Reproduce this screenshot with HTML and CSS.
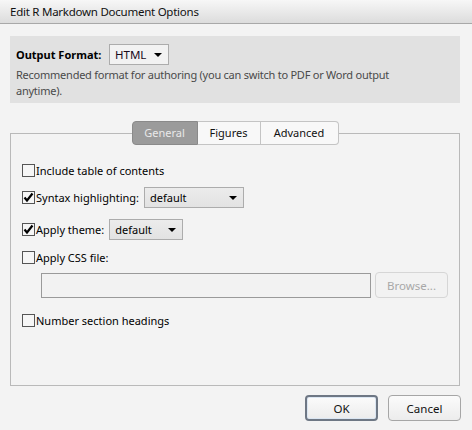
FILE: index.html
```html
<!DOCTYPE html>
<html>
<head>
<meta charset="utf-8">
<link rel="stylesheet" href="styles.css">
</head>
<body>
<div class="dialog">
  <div class="titlebar">Edit R Markdown Document Options</div>
  <div class="content">
    <div class="format-box">
      <div class="format-row">
        <span class="format-label">Output Format:</span>
        <div class="select select-html"><span>HTML</span><span class="arrow"></span></div>
      </div>
      <div class="format-desc">Recommended format for authoring (you can switch to PDF or Word output anytime).</div>
    </div>
    <div class="tabpanel">
      <div class="tabs">
        <div class="tab active">General</div>
        <div class="tab">Figures</div>
        <div class="tab">Advanced</div>
      </div>
      <div class="options">
        <div class="opt opt-toc"><span class="cb"></span><span>Include table of contents</span></div>
        <div class="opt opt-syntax"><span class="cb checked"><svg viewBox="0 0 13 13" width="13" height="13"><path d="M2.5 6.5 L5 9.5 L10.5 2.5" fill="none" stroke="#000" stroke-width="2.2"/></svg></span><span>Syntax highlighting:</span>
          <div class="select select-syntax"><span>default</span><span class="arrow"></span></div></div>
        <div class="opt opt-theme"><span class="cb checked"><svg viewBox="0 0 13 13" width="13" height="13"><path d="M2.5 6.5 L5 9.5 L10.5 2.5" fill="none" stroke="#000" stroke-width="2.2"/></svg></span><span>Apply theme:</span>
          <div class="select select-theme"><span>default</span><span class="arrow"></span></div></div>
        <div class="opt opt-css"><span class="cb"></span><span>Apply CSS file:</span></div>
        <div class="file-row"><div class="file-input"></div><div class="btn browse">Browse...</div></div>
        <div class="opt opt-num"><span class="cb"></span><span>Number section headings</span></div>
      </div>
    </div>
    <div class="footer">
      <div class="btn btn-ok">OK</div>
      <div class="btn">Cancel</div>
    </div>
  </div>
</div>
</body>
</html>
```

FILE: styles.css
```css
* { box-sizing: border-box; }
html, body { margin: 0; padding: 0; }
body {
  width: 472px;
  height: 430px;
  background: #f3f3f3;
  font-family: "Noto Sans", "Liberation Sans", sans-serif;
  font-size: 11px;
  color: #000;
  overflow: hidden;
}
.dialog { width: 472px; height: 430px; display: flex; flex-direction: column; }
.titlebar {
  height: 24px;
  background: linear-gradient(#f7f7f7, #dcdcdc);
  border-bottom: 1px solid #a8a8a8;
  padding-left: 10px;
  line-height: 23px;
  font-size: 11.5px;
  letter-spacing: -0.25px;
  color: #111;
}
.content { padding: 12px 12px 0 10px; display: flex; flex-direction: column; }
.format-box {
  background: #e1e1e1;
  width: 450px;
  height: 67px;
  padding: 8px 6px 0 6px;
}
.format-row { display: flex; align-items: center; height: 21px; }
.format-label { font-weight: bold; width: 93px; }
.select {
  display: flex;
  align-items: center;
  justify-content: space-between;
  height: 21px;
  border: 1px solid #acacac;
  background: linear-gradient(#ececec, #e2e2e2);
  padding: 0 6px 0 5px;
}
.select-html { width: 60px; background: #f2f2f2; color: #1a0a1a; font-size: 11.5px; }
.arrow {
  width: 0; height: 0;
  border-left: 4px solid transparent;
  border-right: 4px solid transparent;
  border-top: 4px solid #000;
}
.format-desc { color: #4a4a4a; line-height: 16px; margin-top: 2px; width: 420px; letter-spacing: -0.24px; }
.tabpanel {
  margin-top: 30px;
  width: 450px;
  height: 253px;
  border: 1px solid #b9b9b9;
  display: flex;
  flex-direction: column;
}
.tabs { display: flex; justify-content: center; margin-top: -13px; }
.tab {
  height: 24px;
  line-height: 22px;
  border: 1px solid #c4c4c4;
  border-left: none;
  background: #f8f8f8;
  text-align: center;
  color: #111;
}
.tab:nth-child(1) { width: 66px; border-left: 1px solid #8a8a8a; border-radius: 4px 0 0 4px; }
.tab:nth-child(2) { width: 63px; }
.tab:nth-child(3) { width: 78px; border-radius: 0 4px 4px 0; }
.tab.active { background: #9b9b9b; color: #e9e9e9; border-color: #8a8a8a; }
.options { padding: 19px 0 0 11px; display: flex; flex-direction: column; }
.opt { display: flex; align-items: center; }
.cb {
  width: 13px; height: 13px;
  border: 1px solid #555;
  background: #f6f6f6;
  margin-right: 1px;
  display: flex;
}
.cb svg { margin: -1px; }
.opt-toc { height: 13px; }
.opt-syntax { height: 21px; margin-top: 10px; }
.opt-theme { height: 21px; margin-top: 11px; }
.opt-css { height: 13px; margin-top: 11px; }
.opt-num { height: 13px; margin-top: 16px; }
.select-syntax { width: 100px; margin-left: 5px; }
.select-theme { width: 74px; margin-left: 5px; }
.file-row { display: flex; align-items: center; margin-top: 8px; padding-left: 19px; height: 26px; }
.file-input { width: 330px; height: 25px; border: 1px solid #9a9a9a; background: #f2f2f2; }
.btn {
  width: 73px; height: 26px;
  border: 1px solid #a6a6a6;
  border-radius: 4px;
  background: linear-gradient(#fbfbfb, #ececec);
  display: flex; align-items: center; justify-content: center;
  font-size: 11.5px;
  color: #111;
}
.browse { margin-left: 4px; color: #a8a8a8; border-color: #d6d6d6; background: #f2f2f2; }
.footer { display: flex; justify-content: flex-end; gap: 10px; margin-top: 9px; margin-right: -1px; }
.btn-ok { border: 2px solid #6e7784; box-shadow: inset 0 0 0 1px #dbe6f2; }
```
